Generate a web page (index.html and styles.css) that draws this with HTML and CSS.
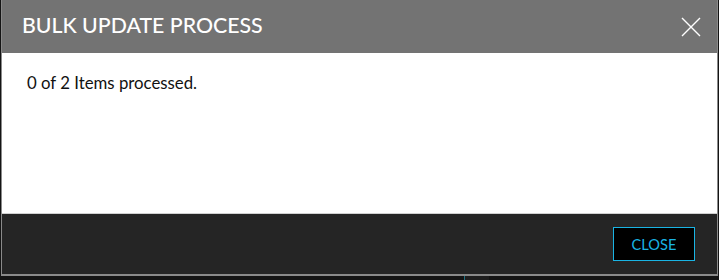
FILE: index.html
```html
<!DOCTYPE html>
<html lang="en">
<head>
    <meta charset="UTF-8">
    <meta name="viewport" content="width=device-width, initial-scale=1.0">
    <title>Bulk Update Process</title>
    <link rel="stylesheet" href="styles.css">
</head>
<body>

    <div class="modal">
        <div class="modal-header">
            <h2>BULK UPDATE PROCESS</h2>
            <button class="modal-x" aria-label="Close">
                <svg width="20" height="20" viewBox="0 0 20 20">
                    <path d="M1 1 L19 19 M19 1 L1 19" stroke="#fff" stroke-width="1.4" fill="none"/>
                </svg>
            </button>
        </div>
        <div class="modal-body">
            <p>0 of 2 Items processed.</p>
        </div>
        <div class="modal-footer">
            <button class="btn-close">CLOSE</button>
        </div>
    </div>

    <div class="backdrop-strip">
        <span class="strip-cell"></span>
    </div>

</body>
</html>
```

FILE: styles.css
```css
body {
    margin: 0;
    background-color: #141414;
    font-family: Lato, "Open Sans", sans-serif;
    width: 719px;
    height: 280px;
    overflow: hidden;
}
.modal {
    margin-left: 1px;
    width: 717px;
    box-sizing: border-box;
    border-left: 1px solid #8a8a8a;
    border-right: 1px solid #8a8a8a;
    border-bottom: 2px solid #8a8a8a;
}
.modal-header {
    height: 53px;
    background: #737373;
    display: flex;
    align-items: center;
    justify-content: space-between;
    padding: 0 16px 3px 20px;
    box-sizing: border-box;
}
.modal-header h2 {
    margin: 0;
    color: #fff;
    font-size: 21.3px;
    font-weight: 500;
}
.modal-x {
    background: none;
    border: none;
    padding: 0;
    width: 20px;
    height: 20px;
    cursor: pointer;
    margin-top: 3px;
}
.modal-x svg { display: block; }
.modal-body {
    background: #fff;
    height: 161px;
    padding: 19px 25px;
    box-sizing: border-box;
    border-bottom: 1px solid #d0d0d0;
}
.modal-body p {
    margin: 0;
    font-size: 16.8px;
    color: #111;
}
.modal-footer {
    background: #252525;
    height: 60px;
    display: flex;
    justify-content: flex-end;
    align-items: center;
    padding-right: 22px;
}
.btn-close {
    width: 82px;
    height: 34px;
    background: #000;
    border: 1px solid #1ab4e4;
    color: #1ab4e4;
    font-family: Lato, "Open Sans", sans-serif;
    font-size: 14.6px;
    cursor: pointer;
}
.backdrop-strip {
    display: flex;
    height: 5px;
    padding-left: 464px;
}
.strip-cell {
    width: 24px;
    border-left: 1px solid #1d6f80;
    background: #1e1e1e;
}
```
